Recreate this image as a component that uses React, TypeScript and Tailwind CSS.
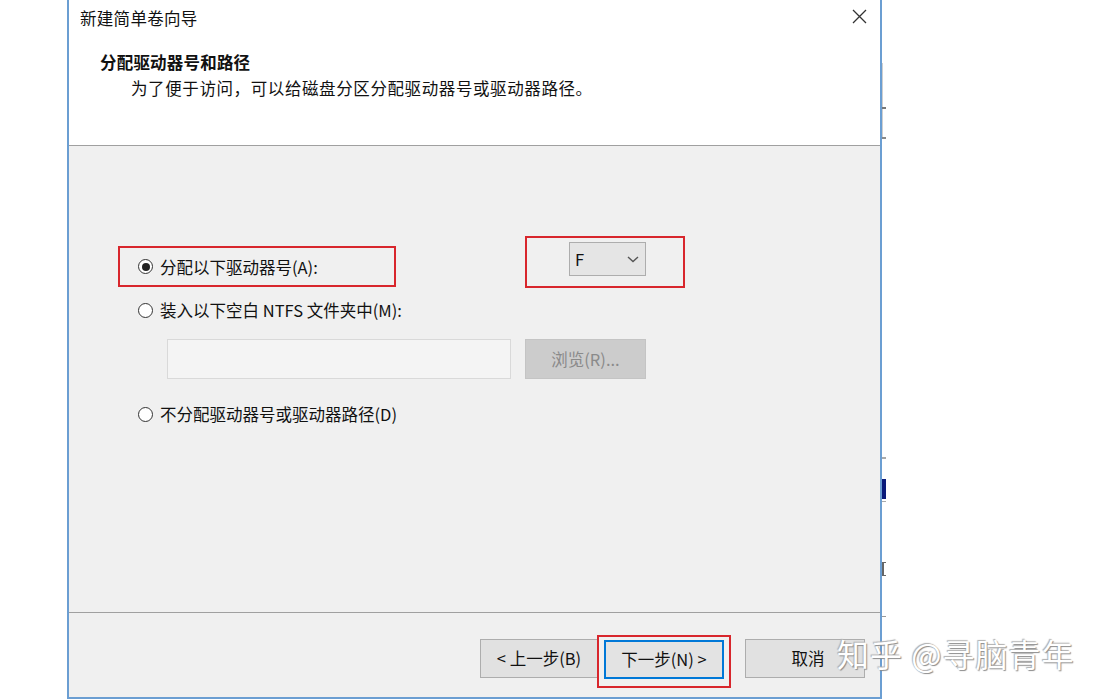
import { ReactNode } from 'react';

const font = { fontFamily: '"Noto Sans CJK SC", "Noto Sans", sans-serif' };

function Radio({ checked, children }: { checked?: boolean; children: ReactNode }) {
    return (
        <div className="flex items-center h-[20px]">
            <span className="w-[15px] h-[15px] rounded-full border border-[#333] bg-white flex items-center justify-center">
                {checked && <span className="w-[8px] h-[8px] rounded-full bg-[#222]" />}
            </span>
            <span className="ml-[7px] text-[16.5px] leading-[20px] text-[#111]">{children}</span>
        </div>
    );
}

function Button({ children, className = '' }: { children: ReactNode; className?: string }) {
    return (
        <div className={`h-[39px] bg-[#e1e1e1] border border-[#adadad] flex items-center justify-center text-[16.5px] text-[#111] ${className}`}>
            {children}
        </div>
    );
}

export default function App() {
    return (
        <div className="relative w-[1103px] h-[700px] bg-white overflow-hidden flex" style={font}>
            <div className="w-[67px] shrink-0" />
            {/* dialog */}
            <div className="w-[815px] h-[699px] border-l-2 border-r-2 border-b-2 border-[#6b9ed2] flex flex-col shrink-0">
                <div className="h-[146px] bg-white border-b border-[#a0a0a0] relative">
                    <div className="pl-[11px] pt-[7px] text-[16.5px] leading-[22px] tracking-[0.3px] text-[#111]">新建简单卷向导</div>
                    <svg className="absolute right-[13px] top-[9px]" width="15" height="15" viewBox="0 0 15 15">
                        <path d="M1 1L14 14M14 1L1 14" stroke="#333" strokeWidth="1.3" />
                    </svg>
                    <div className="pl-[31px] pt-[22px] text-[16.5px] leading-[22px] tracking-[0.2px] font-bold text-[#111]">分配驱动器号和路径</div>
                    <div className="pl-[62px] pt-[4px] text-[16.5px] leading-[22px] tracking-[0.6px] text-[#111]">为了便于访问，可以给磁盘分区分配驱动器号或驱动器路径。</div>
                </div>
                <div className="flex-1 bg-[#f0f0f0] pt-[90px]">
                    <div className="flex items-start">
                        <div className="ml-[49px] mt-[10px] w-[278px] h-[41px] border-2 border-[#d8262c] pl-[18px] flex items-center">
                            <Radio checked>分配以下驱动器号(A):</Radio>
                        </div>
                        <div className="ml-[129px] w-[160px] h-[52px] border-2 border-[#d8262c] pl-[42px] pt-[4px]">
                            <div className="w-[77px] h-[34px] bg-[#e5e5e5] border border-[#adadad] flex items-center justify-between px-[5px]">
                                <span className="text-[16.5px] text-[#111]">F</span>
                                <svg width="14" height="10" viewBox="0 0 14 10">
                                    <path d="M2 3L7 7.5L12 3" stroke="#555" strokeWidth="1.4" fill="none" />
                                </svg>
                            </div>
                        </div>
                    </div>
                    <div className="ml-[69px] mt-[12px]">
                        <Radio>装入以下空白 NTFS 文件夹中(M):</Radio>
                    </div>
                    <div className="flex ml-[98px] mt-[19px]">
                        <div className="w-[344px] h-[40px] bg-[#f4f4f4] border border-[#d9d9d9]" />
                        <div className="ml-[14px] w-[121px] h-[40px] bg-[#cccccc] border border-[#c4c4c4] flex items-center justify-center text-[16.5px] text-[#8a8a8a]">
                            浏览(R)...
                        </div>
                    </div>
                    <div className="ml-[69px] mt-[25px]">
                        <Radio>不分配驱动器号或驱动器路径(D)</Radio>
                    </div>
                </div>
                <div className="h-[85px] bg-[#f0f0f0] border-t border-[#a0a0a0] flex items-start pl-[411px] pt-[22px]">
                    <Button className="w-[118px] mt-[4px]">&lt; 上一步(B)</Button>
                    <div className="-ml-px w-[134px] h-[53px] border-2 border-[#d8262c] pl-[5px] pt-[3px]">
                        <div className="w-[120px] h-[39px] bg-[#e3e3e3] border-2 border-[#0078d7] flex items-center justify-center text-[16.5px] text-[#111]">
                            下一步(N) &gt;
                        </div>
                    </div>
                    <Button className="w-[120px] ml-[14px] mt-[4px] pl-[6px]">取消</Button>
                </div>
            </div>
            {/* window behind */}
            <div className="w-[4px] flex flex-col shrink-0">
                <div className="mt-[63px] h-[44px] border-l border-[#cfcfcf]" />
                <div className="h-[2px] bg-[#777]" />
                <div className="h-[28px] border-l border-[#cfcfcf]" />
                <div className="h-[2px] bg-[#888]" />
                <div className="mt-[318px] h-[2px] bg-[#aaa]" />
                <div className="mt-[20px] h-[20px] bg-[#0a1a7a]" />
                <div className="mt-[2px] h-[1px] bg-[#aaa]" />
                <div className="mt-[60px] h-[14px] border-l-2 border-t border-b border-[#666]" />
                <div className="mt-[40px] h-[1px] bg-[#999]" />
            </div>
            <div
                className="absolute left-[837px] top-[632px] text-[32px] leading-[42px] text-white tracking-[1px] [text-shadow:1px_1px_1px_#8c8c8c,-1px_-1px_1px_#b0b0b0]"
            >
                知乎 @寻脑青年
            </div>
        </div>
    );
}
